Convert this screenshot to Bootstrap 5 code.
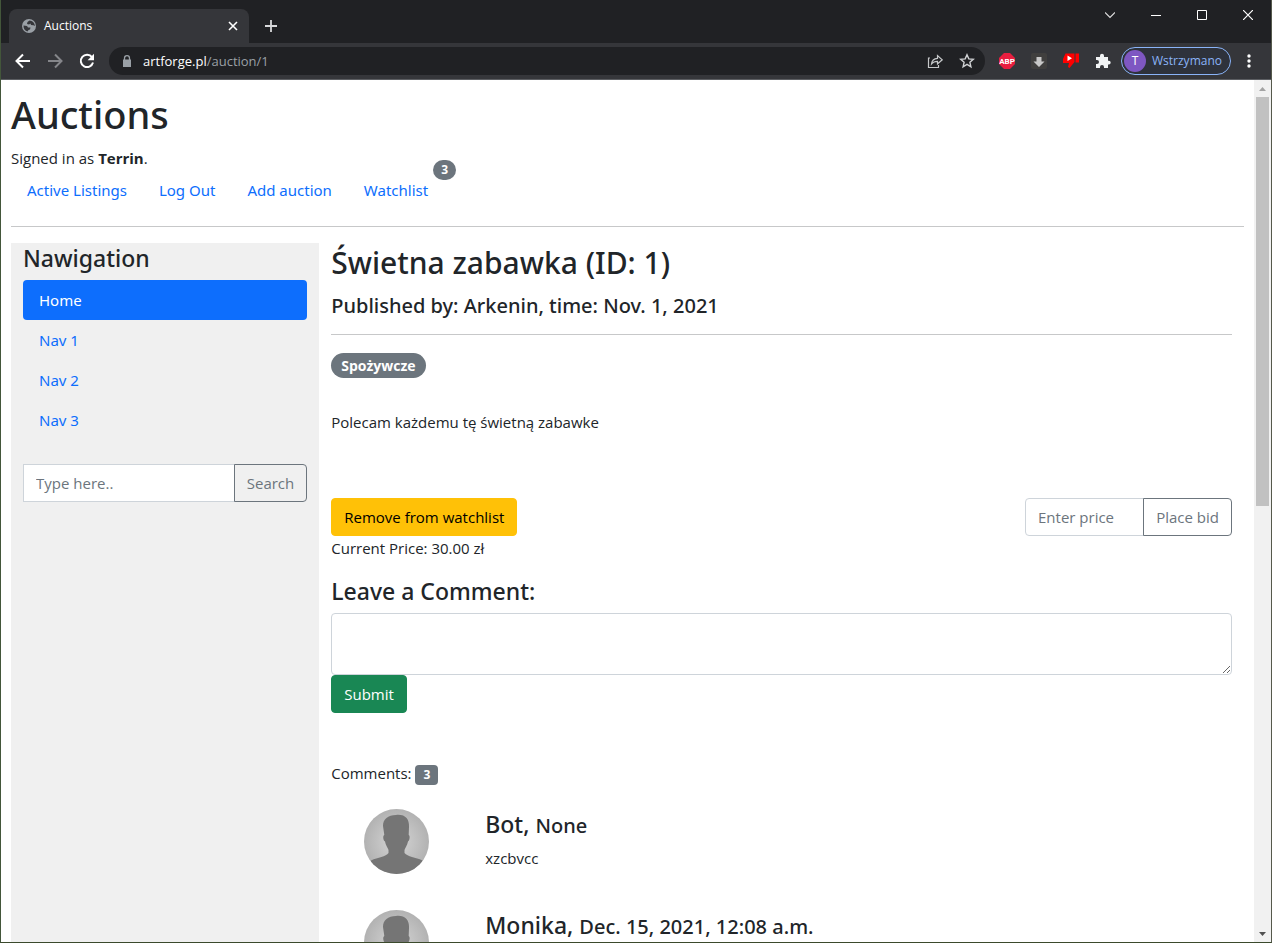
<!DOCTYPE html>
<html lang="pl">
<head>
<meta charset="utf-8">
<meta name="viewport" content="width=device-width, initial-scale=1">
<title>Auctions</title>
<link href="https://cdn.jsdelivr.net/npm/bootstrap@5.3.0/dist/css/bootstrap.min.css" rel="stylesheet">
<style>
  body { font-family: "Open Sans", "Noto Sans", sans-serif; font-size: 15px; line-height: 24px; color: #212529; }
  .window { border-left: 1px solid #43563a; border-right: 1px solid #55594c; border-bottom: 1px solid #3b4a2c; }
  svg { display: block; flex: none; }
  h1, h2, h3, h4, h5 { font-family: "Noto Sans", "Open Sans", sans-serif; font-weight: 500; }
  hr { margin: 16px 0; opacity: .25; }

  /* browser frame */
  .plain { background: none; border: 0; padding: 0; color: inherit; }
  .tabstrip { height: 43px; background: #202124; color: #fff; padding-left: 8px; }
  .tab { width: 240px; height: 34px; background: #35363a; border-radius: 8px 8px 0 0; padding: 0 11px 0 13px; font-size: 12px; }
  .newtab { margin: 0 0 9px 15px; }
  .controls { gap: 36px; padding: 0 18px 0 0; height: 30px; }
  .toolbar { height: 37px; background: #35363a; border-bottom: 1px solid #5c5e62; color: #fff; padding: 4px 18px 4px 14px; }
  .omnibox { height: 28px; border-radius: 14px; background: #202124; padding: 0 10px 0 12px; font-size: 13px; margin-left: 14px; }
  .address { color: #9aa0a6; line-height: 28px; margin-left: 10px; }
  .address b { color: #fff; font-weight: 400; }
  .extensions { gap: 16px; margin-left: 14px; }
  .profile { height: 28px; width: 110px; border: 1px solid #8ab4f8; border-radius: 14px; background: #2e323b; color: #8ab4f8; font-size: 12px; padding: 0 8px 0 2px; margin-left: 10px; }
  .initial { width: 22px; height: 22px; border-radius: 50%; background: #7e57c2; color: #fff; line-height: 22px; }
  .menu { margin-left: 14px; }

  /* page */
  .viewport { min-height: 0; background: #fff; }
  .content-pane { padding: 10px; min-width: 0; overflow: hidden; }
  .scrollrail { width: 17px; background: #f1f1f1; padding: 0 2px; }
  .thumb { height: 47.4%; background: #c1c1c1; }
  .arrow { height: 17px; width: 13px; }
  h1 { font-size: 38px; line-height: 48px; }
  h2 { font-size: 30px; line-height: 40px; margin-bottom: 10px; }
  h3 { font-size: 23px; line-height: 31px; margin-bottom: 6px; }
  h5, .when { font-size: 20px; }
  h5 { line-height: 25px; }
  .nav-link, .btn, .form-control { font-size: 15px; line-height: 24px; }
  .nav-link { --bs-nav-link-color: #0d6efd; color: #0d6efd; font-family: "Noto Sans", "Open Sans", sans-serif; }
  .btn, .form-control, .nav-pills .nav-link { border-radius: 4px; }
  .form-control { border-color: #ced4da; }
  .form-control::placeholder { color: #6c757d; }
  .badge { font-size: 12px; line-height: 12px; padding: 4px 8px; }
  .count { top: -10px; right: -28px; }
  .sidebar { background: #f0f0f0; }
  .tags { padding-top: 2px; }
  .category { font-size: 14px; line-height: 17px; padding: 4px 10px; }
  .description { margin: 32px 0 64px; }
  .bid { width: 207px; }
  .avatar { width: 65px; height: 65px; }
  .avatar-col { width: 154px; padding-left: 33px; }
  .remark { margin-bottom: 36px; }
  .remark h3 { line-height: 30px; margin-bottom: 5px; }
</style>
</head>
<body>
<div class="window d-flex flex-column vh-100 overflow-hidden">
  <header class="flex-shrink-0">
    <div class="tabstrip d-flex align-items-end">
      <div class="tab d-flex align-items-center">
        <svg width="14" height="14" viewBox="0 0 14 14"><circle cx="7" cy="7" r="7" fill="#9aa0a6"/><path d="M7.500 1.500L5.500 3l-.5 2 2 .5 1.500-1 .5 1.500 2.500.3 1.500.7C12.500 3.500 10.500 1.700 7.500 1.500zM1.500 6.500L5 7l1 1.500H8.500L8 10.500l-1.500.5-1 1.500C3 12 1.300 9.500 1.500 6.500z" fill="#35363a"/></svg>
        <span class="ms-2 flex-grow-1">Auctions</span>
        <button class="plain" aria-label="Close tab"><svg width="10" height="10" viewBox="0 0 10 10" stroke="#fff" stroke-width="1.600"><path d="M1 1l8 8M9 1l-8 8"/></svg></button>
      </div>
      <button class="plain newtab" aria-label="New tab"><svg width="14" height="16" viewBox="0 0 14 16" stroke="#d8d9db" stroke-width="1.800"><path d="M1 8h12M7 2v12"/></svg></button>
      <div class="controls d-flex align-items-center ms-auto align-self-start">
        <button class="plain" aria-label="Search tabs"><svg width="10" height="10" viewBox="0 0 10 10" fill="none" stroke="#ddd" stroke-width="1.200"><path d="M0 2.500l5 5 5-5"/></svg></button>
        <button class="plain" aria-label="Minimize"><svg width="10" height="10" viewBox="0 0 10 10" stroke="#fff"><path d="M0 5.500h10"/></svg></button>
        <button class="plain" aria-label="Maximize"><svg width="10" height="10" viewBox="0 0 10 10" fill="none" stroke="#fff"><path d="M.5.500h9v9h-9z"/></svg></button>
        <button class="plain" aria-label="Close"><svg width="10" height="10" viewBox="0 0 10 10" stroke="#fff" stroke-width="1.200"><path d="M0 0l10 10M10 0L0 10"/></svg></button>
      </div>
    </div>
    <div class="toolbar d-flex align-items-center">
      <div class="d-flex gap-3">
        <button class="plain" aria-label="Back"><svg width="16" height="16" viewBox="0 0 16 16" fill="none" stroke="#fff" stroke-width="2"><path d="M15 8H2M8 1.500L1.500 8 8 14.500"/></svg></button>
        <button class="plain" aria-label="Forward"><svg width="16" height="16" viewBox="0 0 16 16" fill="none" stroke="#85868a" stroke-width="2"><path d="M1 8h13M8 1.500L14.500 8 8 14.500"/></svg></button>
        <button class="plain" aria-label="Reload"><svg width="16" height="16" viewBox="0 0 16 16"><path d="M13 4.200A6.200 6.200 0 1 0 14 9.500" fill="none" stroke="#fff" stroke-width="2"/><path d="M15 .8v6.400H8.600z" fill="#fff"/></svg></button>
      </div>
      <div class="omnibox d-flex align-items-center flex-grow-1">
        <svg width="12" height="12" viewBox="0 0 12 12"><path d="M2 4.500h8V12H2z" fill="#9aa0a6"/><path d="M3.500 5V3.200a2.500 2.500 0 0 1 5 0V5" fill="none" stroke="#9aa0a6" stroke-width="1.300"/></svg>
        <span class="address flex-grow-1"><b>artforge.pl</b>/auction/1</span>
        <div class="d-flex gap-3">
          <button class="plain" aria-label="Share"><svg width="16" height="16" viewBox="0 0 16 16" fill="none" stroke="#c6c8ca" stroke-width="1.200"><path d="M3 5H1.500v9.500h10V12M4.500 11c.3-3.500 2.300-5.500 6-5.700V2.500l4.700 4.300-4.700 4.200V8.300C8 8.300 6 9 4.500 11z"/></svg></button>
          <button class="plain" aria-label="Bookmark"><svg width="16" height="16" viewBox="0 0 16 16" fill="none" stroke="#d0d2d4" stroke-width="1.400"><path d="M8 1.800l1.800 4.100 4.500.4-3.400 3 1 4.500L8 11.400l-3.900 2.400 1-4.500-3.400-3 4.500-.4z"/></svg></button>
        </div>
      </div>
      <div class="extensions d-flex">
        <svg width="16" height="16" viewBox="0 0 16 16"><path d="M5 0h6l5 5v6l-5 5H5l-5-5V5z" fill="#e81e3f"/><text x="8" y="11" font-size="8" font-family="Roboto, sans-serif" font-weight="700" text-anchor="middle" fill="#fff">ABP</text></svg>
        <svg width="16" height="16" viewBox="0 0 16 16"><rect width="16" height="16" rx="2" fill="#403f3e"/><path d="M5.500 4h5v4.500H13.500L8 14 2.500 8.500h3z" fill="#c8c8c8"/></svg>
        <svg width="16" height="16" viewBox="0 0 16 16" fill="#f00"><path d="M2.500.500H11.500V9L6.500 15 5 14l1-4H0V6zM12.500.500H16V9.500h-3.500z"/><path d="M4.500 2.500l4.500 2.800-4.500 2.700z" fill="#fff"/></svg>
        <svg width="16" height="16" viewBox="0 0 16 16" fill="#f1f3f4"><path d="M1 4h4V2.800a2 2 0 0 1 4 0V4h4v3.700h.8a1.900 1.900 0 0 1 0 3.800H13V15H9v-1a2 2 0 0 0-4 0v1H1v-4h1a2 2 0 0 0 0-4H1z"/></svg>
      </div>
      <button class="plain profile d-flex align-items-center justify-content-between"><span class="initial">T</span><span>Wstrzymano</span></button>
      <button class="plain menu" aria-label="Menu"><svg width="8" height="16" viewBox="0 0 8 16" fill="#fff"><circle cx="4" cy="3" r="1.700"/><circle cx="4" cy="8" r="1.700"/><circle cx="4" cy="13" r="1.700"/></svg></button>
    </div>
  </header>

  <div class="viewport d-flex flex-grow-1">
    <div class="content-pane flex-grow-1">
      <h1>Auctions</h1>
      <div>Signed in as <strong>Terrin</strong>.</div>
      <ul class="nav">
        <li class="nav-item"><a class="nav-link" href="#">Active Listings</a></li>
        <li class="nav-item"><a class="nav-link" href="#">Log Out</a></li>
        <li class="nav-item"><a class="nav-link" href="#">Add auction</a></li>
        <li class="nav-item position-relative"><a class="nav-link" href="#">Watchlist</a><span class="badge rounded-pill bg-secondary position-absolute count me-3">3</span></li>
      </ul>
      <hr>
      <div class="row g-0">
        <aside class="col-3 sidebar px-2">
          <div class="px-1">
            <h3>Nawigation</h3>
            <ul class="nav nav-pills flex-column mb-4">
              <li class="nav-item"><a class="nav-link active" href="#">Home</a></li>
              <li class="nav-item"><a class="nav-link" href="#">Nav 1</a></li>
              <li class="nav-item"><a class="nav-link" href="#">Nav 2</a></li>
              <li class="nav-item"><a class="nav-link" href="#">Nav 3</a></li>
            </ul>
            <form class="input-group">
              <input class="form-control rounded-0" type="text" placeholder="Type here.." aria-label="Search">
              <button class="btn btn-outline-secondary" type="button">Search</button>
            </form>
          </div>
        </aside>
        <main class="col-9 px-2">
          <div class="px-1">
            <h2>Świetna zabawka (ID: 1)</h2>
            <h5 class="mb-0">Published by: Arkenin, time: Nov. 1, 2021</h5>
            <hr>
            <div class="tags"><span class="badge rounded-pill bg-secondary category">Spożywcze</span></div>
            <p class="description">Polecam każdemu tę świetną zabawke</p>
            <div class="d-flex justify-content-between">
              <button class="btn btn-warning" type="button">Remove from watchlist</button>
              <form class="input-group bid">
                <input class="form-control" type="text" placeholder="Enter price" aria-label="Price">
                <button class="btn btn-outline-secondary" type="button">Place bid</button>
              </form>
            </div>
            <div>Current Price: 30.00 zł</div>
            <form class="pt-3 mb-5">
              <h3><label for="comment">Leave a Comment:</label></h3>
              <textarea class="form-control" id="comment" rows="2"></textarea>
              <button class="btn btn-success" type="button">Submit</button>
            </form>
            <div class="mb-4">Comments: <span class="badge bg-secondary rounded-1">3</span></div>
            <article class="d-flex remark">
              <div class="avatar-col"><svg class="avatar" viewBox="0 0 65 65"><defs><radialGradient id="glow"><stop offset="0" stop-color="#d6d6d6"/><stop offset="1" stop-color="#b2b2b2"/></radialGradient><clipPath id="disc"><circle cx="32.500" cy="32.500" r="32.500"/></clipPath></defs><g id="person" clip-path="url(#disc)"><path d="M0 0h65v65H0z" fill="url(#glow)"/><path d="M32 6c9-1 13.500 4 13 12l-.3 8c1.800 1 .7 6-.7 6.500-.7 4-3 6.500-3.500 8.500v3c3 4 11 4 18 7.500V65H7V51.500C14 48 22 48 24.500 44v-3c-.7-2-3-5-3.500-8.500-1.500-.5-2.700-5.500-.7-6.500L19 17C19 10 24 6 32 6z" fill="#757575"/></g></svg></div>
              <div><h3>Bot, <span class="when">None</span></h3><div>xzcbvcc</div></div>
            </article>
            <article class="d-flex remark">
              <div class="avatar-col"><svg class="avatar" viewBox="0 0 65 65"><use href="#person"/></svg></div>
              <div><h3>Monika, <span class="when">Dec. 15, 2021, 12:08 a.m.</span></h3></div>
            </article>
          </div>
        </main>
      </div>
    </div>
    <div class="scrollrail d-flex flex-column flex-shrink-0" aria-hidden="true">
      <svg class="arrow" viewBox="0 0 13 17"><path d="M3 11l3.500-4 3.500 4z" fill="#a3a3a3"/></svg>
      <div class="thumb"></div>
      <svg class="arrow mt-auto" viewBox="0 0 13 17"><path d="M3 7l3.500 4L10 7z" fill="#505050"/></svg>
    </div>
  </div>
</div>
<script src="https://cdn.jsdelivr.net/npm/bootstrap@5.3.0/dist/js/bootstrap.bundle.min.js"></script>
</body>
</html>
